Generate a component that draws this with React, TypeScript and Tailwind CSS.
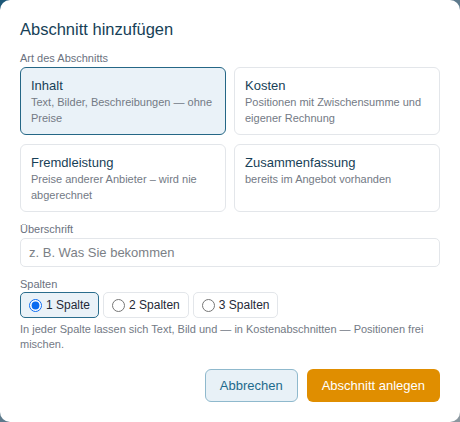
import { useState } from "react";

type Kind = "inhalt" | "kosten" | "fremd" | "summe";

const kinds: { id: Kind; title: string; desc: string }[] = [
  { id: "inhalt", title: "Inhalt", desc: "Text, Bilder, Beschreibungen — ohne Preise" },
  { id: "kosten", title: "Kosten", desc: "Positionen mit Zwischensumme und eigener Rechnung" },
  { id: "fremd", title: "Fremdleistung", desc: "Preise anderer Anbieter – wird nie abgerechnet" },
  { id: "summe", title: "Zusammenfassung", desc: "bereits im Angebot vorhanden" },
];

export default function App() {
  const [kind, setKind] = useState<Kind>("inhalt");
  const [cols, setCols] = useState(1);

  return (
    <div className="w-[460px] h-[422px] bg-gradient-to-br from-[#1d5878] via-[#5d7a8c] to-[#8b979f] font-['Liberation_Sans',Arial,sans-serif]">
      <div className="w-full h-full bg-white rounded-[10px] px-5 pt-[18px] pb-5 flex flex-col">
        {/* Header */}
        <h2 className="text-[16.5px] leading-[22px] text-[#173f57]">Abschnitt hinzufügen</h2>

        {/* Type */}
        <div className="mt-[11px] text-[11px] leading-[14px] text-[#6b7280]">Art des Abschnitts</div>
        <div className="mt-[2px] grid grid-cols-2 gap-x-2 gap-y-[9px]">
          {kinds.map((k) => (
            <button
              key={k.id}
              type="button"
              onClick={() => setKind(k.id)}
              className={`h-[68px] rounded-[6px] border px-[10px] pt-[9px] text-left flex flex-col ${
                kind === k.id
                  ? "border-[#256786] bg-[#eaf2f8]"
                  : "border-[#e3e6ea] bg-white"
              }`}
            >
              <span className="text-[13px] leading-[17px] text-[#173f57]">{k.title}</span>
              <span className="text-[11px] leading-[16px] text-[#737a85]">{k.desc}</span>
            </button>
          ))}
        </div>

        {/* Heading */}
        <div className="mt-[10px] text-[11px] leading-[14px] text-[#6b7280]">Überschrift</div>
        <input
          type="text"
          placeholder="z. B. Was Sie bekommen"
          className="mt-[2px] h-[29px] w-full rounded-[5px] border border-[#e3e6ea] px-2 text-[13px] text-[#173f57] placeholder:text-[#7b7f86] outline-none"
        />

        {/* Columns */}
        <div className="mt-[10px] text-[11px] leading-[14px] text-[#6b7280]">Spalten</div>
        <div className="mt-[1px] flex gap-1">
          {[1, 2, 3].map((n) => (
            <label
              key={n}
              className={`h-[26px] flex items-center gap-[4px] rounded-[5px] border pl-2 pr-[8px] text-[12px] text-[#1f2937] cursor-pointer ${
                cols === n ? "border-[#2a6d8d] bg-[#eaf2f8]" : "border-[#e3e6ea] bg-white"
              }`}
            >
              <input
                type="radio"
                name="cols"
                checked={cols === n}
                onChange={() => setCols(n)}
                className="w-[13px] h-[13px] m-0 accent-[#0b6bf0]"
              />
              {n === 1 ? "1 Spalte" : `${n} Spalten`}
            </label>
          ))}
        </div>
        <p className="mt-[4px] text-[11px] leading-[15px] text-[#737a85]">
          In jeder Spalte lassen sich Text, Bild und — in Kostenabschnitten — Positionen frei mischen.
        </p>

        {/* Actions */}
        <div className="mt-auto flex justify-end gap-[9px]">
          <button
            type="button"
            className="h-[33px] px-[14px] rounded-[6px] border border-[#8fb9cd] bg-[#e8f1f7] text-[13px] text-[#1d6a8c]"
          >
            Abbrechen
          </button>
          <button
            type="button"
            className="h-[33px] px-[15px] rounded-[6px] bg-[#e08e00] text-[13px] text-white"
          >
            Abschnitt anlegen
          </button>
        </div>
      </div>
    </div>
  );
}
